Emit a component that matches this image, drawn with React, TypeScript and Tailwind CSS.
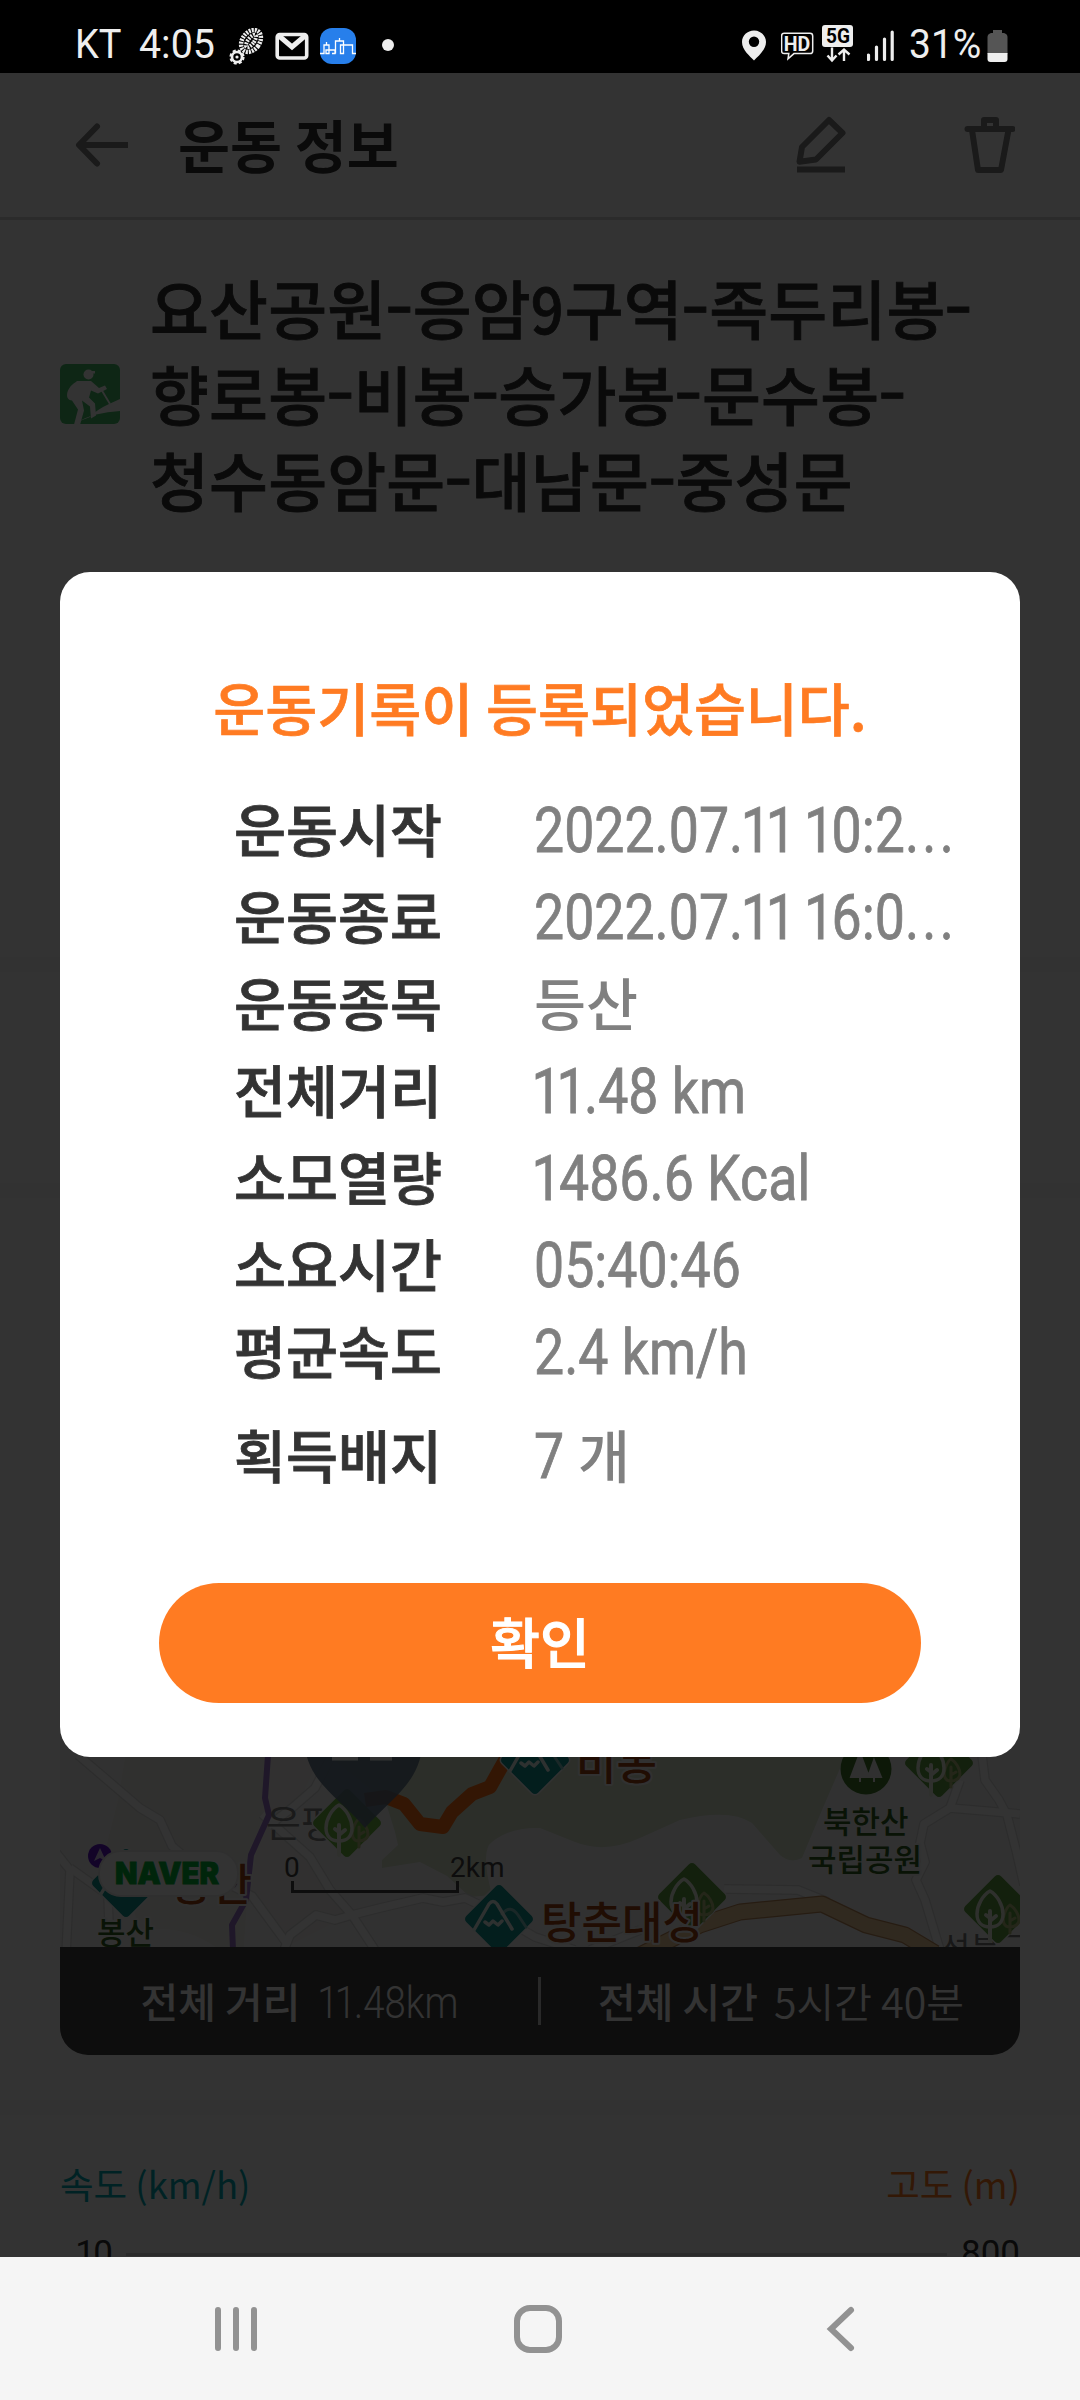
import type React from "react"

interface RecordRow {
  label: string
  value: string
}

const records: RecordRow[] = [
  { label: "운동시작", value: "2022.07.11 10:2..." },
  { label: "운동종료", value: "2022.07.11 16:0..." },
  { label: "운동종목", value: "등산" },
  { label: "전체거리", value: "11.48 km" },
  { label: "소모열량", value: "1486.6 Kcal" },
  { label: "소요시간", value: "05:40:46" },
  { label: "평균속도", value: "2.4 km/h" },
]

const titleLines = ["요산공원-응암9구역-족두리봉-", "향로봉-비봉-승가봉-문수봉-", "청수동암문-대남문-중성문"]

// Condensed latin text, the "1" is set tighter than the other digits
const Latin: React.FC<{ text: string; className?: string }> = ({ text, className = "" }) => (
  <span className={`inline-block origin-left whitespace-pre font-[Roboto] ${className}`}>
    {text.split(/(1|\.\.\.)/).map((part, i) => {
      if (part === "1") {
        return (
          <span key={i} className="mx-[-0.048em]">
            {part}
          </span>
        )
      }
      if (part === "...") {
        return (
          <span key={i} className="tracking-[0.06em]">
            {part}
          </span>
        )
      }
      return part
    })}
  </span>
)

const StatusBar = () => (
  <div className="flex h-[73px] shrink-0 items-start bg-black text-[#eeeeee] font-[Roboto]">
    <div className="mt-[21px] ml-[75px] w-[64px] text-[40px] leading-[48px]">
      <span className="inline-block origin-left scale-x-[0.95]">KT</span>
    </div>
    <div className="mt-[20px] w-[90px] text-[41px] leading-[48px]">
      <span className="inline-block origin-left scale-x-[0.96]">4:05</span>
    </div>
    {/* Footprint */}
    <svg className="mt-[28px] h-[38px] w-[36px]" viewBox="229 28 36 38" fill="none">
      <g transform="rotate(36 251 41)" stroke="#eeeeee">
        <ellipse cx="251" cy="41" rx="8.600" ry="12" strokeWidth="4.500" strokeDasharray="2 1" />
        <ellipse cx="251" cy="41" rx="3" ry="7.500" strokeWidth="4" strokeDasharray="1.800 1.100" />
      </g>
      <circle cx="237" cy="57" r="5" stroke="#eeeeee" strokeWidth="2.600" />
      <circle cx="237" cy="57" r="6.400" stroke="#eeeeee" strokeWidth="2.400" strokeDasharray="3 2.030" />
      <circle cx="237" cy="57" r="1.600" fill="#eeeeee" />
    </svg>
    {/* Mail */}
    <svg className="mt-[32px] ml-[10px] h-[28px] w-[34px]" viewBox="275 33 34 28">
      <rect x="277.200" y="35.500" width="29.500" height="23.500" rx="2.500" fill="none" stroke="#eeeeee" strokeWidth="3.600" />
      <path d="M278 36l14 12L306 36" fill="none" stroke="#eeeeee" strokeWidth="5" />
    </svg>
    <svg className="mt-[28px] ml-[11px] h-[36px] w-[36px]" viewBox="320 28 36 36">
      <rect x="320" y="28" width="36" height="36" rx="12" fill="#277feb" />
      <path
        d="M320 53.500h4V45h5v8.500h-3V50h9v3.500h-3M335.500 53.500V41h8v12.500h-3V45h12v8.500h3.500M326.500 42v3M339.500 38v3"
        fill="none"
        stroke="#fff"
        strokeWidth="1.300"
      />
    </svg>
    <div className="mt-[39px] ml-[26px] size-[12px] rounded-full bg-[#eeeeee]" />
    {/* System icons */}
    <svg className="mt-[30px] ml-auto h-[32px] w-[24px]" viewBox="742 30 24 32">
      <path
        d="M754 30.500c-6.600 0-12 5-12 11.400C742 50 750 56 754 60.500 758 56 766 50 766 41.900c0-6.400-5.400-11.400-12-11.400z"
        fill="#eeeeee"
      />
      <circle cx="754" cy="41.700" r="5.200" fill="#000" />
    </svg>
    <svg className="mt-[32px] ml-[15px] h-[30px] w-[33px]" viewBox="781 32 33 30">
      <path
        d="M784 33.200h26q2.700 0 2.700 2.700v15q0 2.700-2.700 2.700h-16l-6 5.200.8-5.200H784q-2.400 0-2.400-2.700v-15q0-2.700 2.400-2.700z"
        fill="none"
        stroke="#eeeeee"
        strokeWidth="1.500"
      />
      <text x="783.800" y="51" fontSize="20" fontWeight="700" fill="#eeeeee" textLength="26.500" lengthAdjust="spacingAndGlyphs">
        HD
      </text>
    </svg>
    <svg className="mt-[25px] ml-[8px] h-[38px] w-[31px]" viewBox="822 25 31 38">
      <rect x="822" y="25" width="31" height="22" rx="3" fill="#eeeeee" />
      <text x="826" y="43" fontSize="21" fontWeight="700" fill="#000" textLength="24" lengthAdjust="spacingAndGlyphs">
        5G
      </text>
      <path d="M832 47.500v13M827.500 55.500l4.500 5 4.500-5M844 61V49.500M838.500 54.500l5.500-5 5.500 5" fill="none" stroke="#eeeeee" strokeWidth="2.400" />
    </svg>
    <svg className="mt-[30px] ml-[14px] h-[32px] w-[28px]" viewBox="867 30 28 32">
      <path d="M868.500 55v4.500M876.500 47v12.500M884.500 39v20.500M892.200 32v27.500" stroke="#eeeeee" strokeWidth="3.200" strokeLinecap="round" />
    </svg>
    <div className="mt-[20px] ml-[14px] w-[78px] text-[41px] leading-[48px]">
      <span className="inline-block origin-left scale-x-[0.95]">31%</span>
    </div>
    <svg className="mt-[29px] mr-[72px] h-[34px] w-[21px]" viewBox="987.500 29 21 34">
      <path d="M993.500 30h9v3h2q3.500 1 3.500 4v17h-20V37q0-3 3.500-4h2z" fill="#555" />
      <path d="M988 53h20v6q0 3-3 3h-14q-3 0-3-3z" fill="#eeeeee" />
    </svg>
  </div>
)

const Header = () => (
  <div className="flex h-[147px] shrink-0 items-center border-b-[3px] border-[#d8d8d8] pl-[75px]">
    <svg className="h-[44px] w-[54px]" viewBox="75 123 54 44" fill="none" stroke="#808080" strokeWidth="6">
      <path d="M128 145H80" />
      <path d="M97 126.500L79 145l18 18.500" strokeLinecap="round" strokeLinejoin="round" />
    </svg>
    <h1 className="ml-[49px] w-[618px] pb-[3px] text-[56.500px] leading-none font-bold text-[#333]">운동 정보</h1>
    <svg className="h-[60px] w-[50px]" viewBox="797 116 50 60" fill="none" stroke="#808080" strokeWidth="6">
      <path d="M830 121l13.500 13L817 160.500l-16.500 2.200L803 148z" strokeLinejoin="round" />
      <path d="M798 170.500h48" />
    </svg>
    <svg className="ml-[118px] h-[60px] w-[51px]" viewBox="964 116 51 60" fill="none" stroke="#808080" strokeWidth="6">
      <path d="M967.500 130h45" strokeLinecap="round" />
      <path d="M984 129v-8h12v8M972 131l6 40h23l7.500-40" strokeLinejoin="round" />
    </svg>
  </div>
)

const Diamond: React.FC<{ x: number; y: number; kind: "tree" | "peak"; fill?: string }> = ({ x, y, kind, fill }) => (
  <g transform={`translate(${x} ${y})`} fill="none" strokeLinecap="round" strokeLinejoin="round">
    <rect
      x="-26"
      y="-26"
      width="52"
      height="52"
      rx="5"
      transform="rotate(45)"
      fill={fill ?? (kind === "tree" ? "#5fa040" : "#0f9490")}
      stroke="#f4f4f4"
      strokeWidth="1.500"
    />
    {kind === "tree" ? (
      <>
        <path d="M12 18c-6 0-8-5-6-12 2-6 4-9 6-10 5 3 9 10 9 15 0 4-4 7-9 7zM12 4v20M12 12l5-3" stroke="#b5bd7c" strokeWidth="3" />
        <path d="M-8 18c-8 0-13-5-13-13 0-9 6-19 13-23 7 4 13 14 13 23 0 8-5 13-13 13z" fill={fill ?? "#5fa040"} stroke="#e8f0e0" strokeWidth="3.500" />
        <path d="M-8 2v30M-8 12l6-5M-8 9l-4-3" stroke="#e8f0e0" strokeWidth="4" />
      </>
    ) : (
      <>
        <path d="M3 -5c6-7 11-6 16 1l8 12" stroke="#80c4c0" strokeWidth="3" />
        <path d="M-25 11L-10-15q4-5 8 0L13 10M-14 3l4 3 4-4 5 4 4-4" stroke="#e4f2f0" strokeWidth="3.500" />
      </>
    )}
  </g>
)

const roads = [
  "M78 1755L140 1808L160 1820L172 1846L200 1870L252 1896L288 1945",
  "M262 1814L310 1857L330 1890L352 1915L375 1950",
  "M284 1950L290 1935L316 1915L335 1920L352 1915L380 1908L423 1898L443 1902L465 1898L482 1906L535 1937L575 1950",
  "M332 1755L315 1788L292 1808L268 1826",
  "M50 1845L70 1870L66 1955",
  "M70 1868L108 1895L109 1925",
  "M982 1755L985 1780L999 1800L1007 1815L1016 1850L1024 1885",
  "M1020 1814L950 1808L924 1824L920 1843L925 1862L916 1880L925 1900L940 1950",
  "M950 1808L960 1780",
  "M724 1889L798 1890L828 1902",
  "M590 1950L640 1930",
]

const RouteMap = () => (
  <svg
    className="block h-[677px] w-full bg-[#f6f6f6]"
    viewBox="60 1270 960 677"
    fontFamily="'Noto Sans CJK KR', sans-serif"
    fontWeight="500"
  >
    <path d="M125 1270V1757L118 1800 100 1870 130 1900 140 1930Q185 1925 215 1947H244L250 1855 268 1815 285 1757V1270z" fill="#f1f0ea" />
    <path d="M270 1757H320L300 1800 268 1826 310 1860 350 1915 290 1945 250 1895z" fill="#f2f1ed" />
    <path
      d="M330 1270V1757L385 1800 395 1832 398 1845 382 1860 382 1868 420 1862 447 1876 470 1897 492 1895Q480 1850 492 1842 510 1827 540 1828L575 1842Q605 1854 640 1838L680 1820Q730 1808 752 1823L780 1855Q790 1864 802 1858L822 1810 845 1757V1270z"
      fill="#dae4ce"
    />
    {roads.map((d) => (
      <path key={d} d={d} fill="none" stroke="#dcdcdc" strokeWidth="10" strokeLinejoin="round" />
    ))}
    {roads.map((d) => (
      <path key={d} d={d} fill="none" stroke="#fcfcfc" strokeWidth="7.500" strokeLinejoin="round" />
    ))}
    <g fill="none" strokeLinejoin="round">
      <path d="M640 1955L700 1925 740 1912 822 1904 866 1925 905 1935 935 1953" stroke="#bd8c5c" strokeWidth="17" />
      <path d="M640 1955L700 1925 740 1912 822 1904 866 1925 905 1935 935 1953" stroke="#f0cc9c" strokeWidth="14.500" />
      <path d="M268 1755L265 1798 269 1815 251 1855 246 1900 232 1925 233 1950" stroke="#9a74cc" strokeWidth="6" />
    </g>

    {/* Place names below the markers */}
    <text x="266" y="1837" fontSize="38" fontWeight="400" fill="#808080">
      은평
    </text>
    <text x="940" y="1961" fontSize="33" fontWeight="400" fill="#777">
      성북구
    </text>

    <Diamond x={126} y={1883} kind="peak" />
    <Diamond x={347} y={1823} kind="tree" fill="#70b844" />
    <path d="M508 1755L490 1787 472 1794 452 1812 443 1827 420 1824 404 1804 386 1797 365 1800" fill="none" stroke="#fd6f14" strokeWidth="14" strokeLinejoin="round" />
    <path d="M304 1735C304 1782 338 1795 365 1828 394 1795 423 1782 423 1735z" fill="#5d7288" opacity="0.88" />
    <path d="M332 1757.500h26M370 1757.500h22" stroke="#fff" strokeWidth="6" />
    <Diamond x={535} y={1760} kind="peak" />
    <Diamond x={499} y={1919} kind="peak" />
    <Diamond x={692} y={1897} kind="tree" />
    <Diamond x={939} y={1763} kind="tree" />
    <Diamond x={998} y={1909} kind="tree" />
    <circle cx="866" cy="1769" r="25.500" fill="#41782c" />
    <path d="M860 1753l-9 24h18zM860 1776v6M874 1760l-6 17h13zM874 1776v6" fill="#eee" stroke="#eee" strokeWidth="2" />

    <g stroke="#f6f6f6" strokeWidth="4" strokeLinejoin="round" paintOrder="stroke">
      <g fill="#a04010" fontSize="44">
        <text x="576" y="1780">비봉</text>
        <text x="541" y="1939">탕춘대성</text>
        <text x="171" y="1901">봉산</text>
      </g>
      <g fill="#2f6020" fontSize="31">
        <text x="97" y="1944">봉산</text>
        <text x="823" y="1833">북한산</text>
        <text x="808" y="1871">국립공원</text>
      </g>
    </g>

    <circle cx="100" cy="1856" r="12" fill="#6018c8" />
    <path d="M100 1848l6 13-6-3-6 3z" fill="#d8c8f0" />
    <rect x="99" y="1851" width="139" height="45" rx="22" fill="#fff" stroke="#ececec" strokeWidth="2" />
    <text x="115" y="1884" fontFamily="Inter" fontSize="29.500" fontWeight="900" fill="#00b837" stroke="#00b837" strokeWidth="0.800" textLength="104" lengthAdjust="spacingAndGlyphs">
      NAVER
    </text>
    <g fontFamily="Roboto" fontSize="28" fontWeight="400" fill="#444">
      <text x="284" y="1877">0</text>
      <text x="450" y="1877">2km</text>
    </g>
    <path d="M292.500 1881v10.500h165V1881" fill="none" stroke="#444" strokeWidth="3" />
  </svg>
)

const Hiker = () => (
  <svg className="mt-[4px] h-[60px] w-[60px] shrink-0" viewBox="60 364 60 60">
    <rect x="60" y="364" width="60" height="60" rx="6" fill="#45bd6a" />
    <g fill="#fff">
      <circle cx="88.500" cy="374.500" r="5" />
      <path d="M88 371h7v2.500h-7z" />
      <path d="M82 381h9l8 7 6-2.500 2 3.500-9 4.500-7-3-2 7 6 6 1 12-5 3-1-12-8-6 2 10-5 18h-6l5-19-6-9c-5 0-6-5-4-10 3-6 6-7 9-9.500z" />
      <path d="M75 423Q95 412 120 411V399L109 404Q96 410 90 417 82 420 75 423z" />
    </g>
    <path d="M101 389l9 15" stroke="#fff" strokeWidth="1.800" />
  </svg>
)

const Divider = () => <div className="h-[15px] shrink-0 bg-[#f8f8f8]" />

// Workout detail page that sits under the dialog
const DetailPage = () => (
  <div className="flex h-full flex-col overflow-hidden bg-white">
    <Header />
    <div className="flex h-[737px] shrink-0 items-start pt-[43px] pl-[60px]">
      <div className="flex items-center gap-[30px]">
        <Hiker />
        <div className="text-[64px] leading-[86px] font-medium tracking-[0.2px] whitespace-nowrap text-[#333] [-webkit-text-stroke:0.8px_#333]">
          {titleLines.map((line) => (
            <p key={line}>
              {line.split(/(-|9)/).map((part, i) => {
                if (part === "-") {
                  return (
                    <span key={i} className="mx-[1.7px] inline-block -translate-y-[6px] scale-x-[1.25]">
                      -
                    </span>
                  )
                }
                if (part === "9") {
                  return (
                    <span key={i} className="mx-[-1.5px] inline-block scale-x-90">
                      9
                    </span>
                  )
                }
                return part
              })}
            </p>
          ))}
        </div>
      </div>
    </div>
    <Divider />
    <div className="h-[211px] shrink-0" />
    <Divider />
    <div className="mx-[60px] mt-[72px] mb-[45px] h-[785px] shrink-0 overflow-hidden rounded-[28px]">
      <RouteMap />
      <div className="relative grid h-[108px] grid-cols-2 bg-[#404040] text-[41px] leading-[107px] text-white">
        <div className="flex justify-center gap-[18px] whitespace-nowrap">
          <span className="font-medium">전체 거리</span>
          <span className="w-[141px]">
            <Latin text="11.48km" className="scale-x-[0.85] text-[45px] font-light" />
          </span>
        </div>
        <div className="flex justify-center gap-[16px] whitespace-nowrap">
          <span className="font-medium">전체 시간</span>
          <span className="w-[188px] font-[350]">5시간 40분</span>
        </div>
        <div className="absolute top-[30px] left-[478px] h-[48px] w-[3px] bg-[#ccc]" />
      </div>
    </div>
    <Divider />
    <div className="mt-[39px] flex shrink-0 justify-between px-[60px] text-[36.500px] leading-[60px] whitespace-nowrap">
      <span className="text-[#00aab4]">속도 (km/h)</span>
      <span className="text-[#ff7b22]">고도 (m)</span>
    </div>
    <div className="mt-[18px] flex shrink-0 justify-between pr-[60px] pl-[77px] text-[35px] leading-[44px] text-[#333]">
      <Latin text="10" />
      <div className="mt-[21px] ml-[13px] h-[3px] flex-1 bg-[#d8d8d8]" />
      <Latin text="800" className="ml-[14px]" />
    </div>
  </div>
)

const RecordDialog = () => (
  <div className="absolute top-[499px] right-[60px] left-[60px] flex h-[1185px] flex-col items-center rounded-[30px] bg-white pt-[89px]">
    <h2 className="text-[56.500px] leading-[90px] font-medium whitespace-nowrap text-[#ff7b22] [-webkit-text-stroke:0.7px_#ff7b22]">
      운동기록이 등록되었습니다.
    </h2>
    <dl className="mt-[33px] w-full pl-[174px] text-[56.500px] leading-[87px] font-medium whitespace-nowrap">
      {records.map((row) => (
        <div key={row.label} className="flex h-[87px]">
          <dt className="w-[300px] shrink-0 text-[#333] [-webkit-text-stroke:0.8px_#333]">{row.label}</dt>
          <dd className="w-[420px] shrink-0 text-[#808080]">
            {/[가-힣]/.test(row.value) ? (
              row.value
            ) : (
              <Latin text={row.value} className="scale-x-[0.845] text-[63.500px] font-normal [-webkit-text-stroke:0.8px_#808080]" />
            )}
          </dd>
        </div>
      ))}
      <div className="mt-[17px] flex h-[87px]">
        <dt className="w-[300px] shrink-0 text-[#333] [-webkit-text-stroke:0.8px_#333]">획득배지</dt>
        <dd className="flex items-baseline text-[#808080]">
          <Latin text="7" className="w-[44px] scale-x-[0.845] text-[63.500px] font-normal [-webkit-text-stroke:0.8px_#808080]" />
          <span>개</span>
        </dd>
      </div>
    </dl>
    <button
      type="button"
      className="mt-[86px] h-[120px] w-[762px] shrink-0 rounded-full bg-[#ff7b22] pb-[5px] text-[54px] font-medium text-white [-webkit-text-stroke:1px_#fff]"
    >
      확인
    </button>
  </div>
)

const NavBar = () => (
  <div className="flex h-[143px] shrink-0 items-center bg-[#f5f5f5] pl-[214px]">
    <svg className="h-[50px] w-[44px]" viewBox="0 0 44 50" stroke="#929292" strokeWidth="6" strokeLinecap="round">
      <path d="M4 6v38M22 6v38M40 6v38" />
    </svg>
    <svg className="ml-[254px] h-[50px] w-[52px]" viewBox="0 0 52 50" fill="none" stroke="#929292" strokeWidth="6">
      <rect x="5" y="4" width="42" height="42" rx="13" />
    </svg>
    <svg className="ml-[260px] h-[50px] w-[34px]" viewBox="0 0 34 50" fill="none" stroke="#929292" strokeWidth="6" strokeLinecap="round">
      <path d="M27 6L7 25l20 19" />
    </svg>
  </div>
)

export default function App() {
  return (
    <div className="flex h-[2400px] w-[1080px] flex-col overflow-hidden font-['Noto_Sans_CJK_KR',sans-serif]">
      <StatusBar />
      <div className="relative h-[2184px] shrink-0">
        <DetailPage />
        <div className="absolute inset-0 bg-black/80" />
        <RecordDialog />
      </div>
      <NavBar />
    </div>
  )
}
